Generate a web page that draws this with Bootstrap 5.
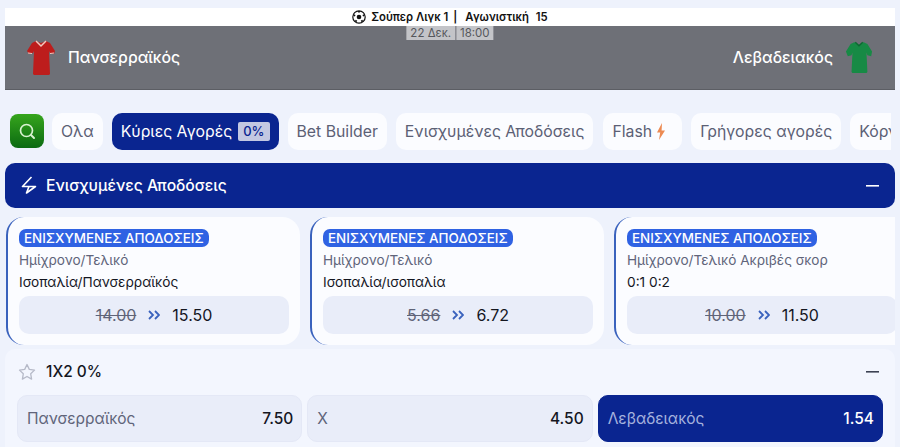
<!DOCTYPE html>
<html lang="el">
<head>
<meta charset="utf-8">
<title>Πανσερραϊκός - Λεβαδειακός</title>
<link href="https://cdn.jsdelivr.net/npm/bootstrap@5.3.0/dist/css/bootstrap.min.css" rel="stylesheet">
<style>
html,body{height:447px;overflow:hidden}
body{background:#eef2fc;font-family:Inter,"Noto Sans",sans-serif;color:#14161f;padding:8px 5px 0}
.league-bar{height:18px;background:#fff;font-size:11.3px;font-weight:600;color:#111;gap:5px;line-height:18px}
.league-sep{margin:0 3px 0 0}
.league-num{margin-left:2px}
.match-bar{height:64px;background:#6e7077;border-bottom:1px solid #5c5e64;padding:0 22px 0 21px;position:relative}
.kick{position:absolute;top:0;left:50%;transform:translateX(-50%);font-size:11.5px;line-height:14px;color:#55575c;display:flex;gap:1px}
.kick span{background:#c3c4c8;padding:0 4px}
.team{color:#fff;font-size:15.8px;font-weight:500;gap:12px}
.tabs{margin-top:22px;height:38px;padding:0 4px 0 5px;gap:9px;overflow:hidden;margin-right:4px}
.srch{width:34px;height:34px;flex:none;border-radius:8px;background:linear-gradient(#36a51c,#0b6a12);margin-right:-1px}
.tabi{flex:none;height:37px;padding:0 9px;border-radius:10px;background:#fbfcff;color:#5b6075;font-size:15.8px;white-space:nowrap;line-height:37px}
.tabi.act{background:#0a2590;color:#fff}
.tabi.fl{padding-right:16px;margin-left:1px}
.pct{display:inline-block;background:#c3c8e2;color:#0a2590;font-size:13px;font-weight:500;line-height:19px;padding:0 5px;margin-left:6px;border-radius:2px;vertical-align:1px}
.boost-head{margin-top:13px;height:45px;background:#0a2590;color:#fff;border-radius:10px;padding:0 16px 0 16px;font-size:15.7px;font-weight:500}
.head-l{gap:5px}
.boost-row{margin-top:9px;gap:10px;overflow:hidden;height:128px;padding-left:1px}
.bcard{flex:0 0 294px;height:128px;background:#fbfcff;border-radius:18px;border-left:2px solid #3a62bd;padding:12px 11px 0 11px;display:flex;flex-direction:column}
.bcard.last{border-top-right-radius:0;border-bottom-right-radius:0}
.pill{align-self:flex-start;background:#2f62e3;color:#fff;font-size:13.4px;font-weight:500;line-height:18px;padding:0 5px;border-radius:7px;white-space:nowrap}
.mk{color:#60647a;font-size:13.6px;line-height:20px;margin-top:3px}
.sel{color:#14161f;font-size:13.7px;line-height:20px;margin-top:2px}
.oddbox{margin-top:4px;height:38px;background:#e9edf9;border-radius:10px;gap:12px;font-size:16px;font-weight:400}
.old{color:#5f6478;text-decoration:line-through}
.market{margin-top:4px;background:#f3f6fe;border-radius:10px 10px 0 0;height:110px;padding:0 12px}
.mhead{height:46px;padding:0 4px 0 1px;font-size:15.4px;font-weight:500;gap:10px}
.odds{gap:5px}
.ob{flex:1 1 0;height:47px;background:#e9edf9;border:1px solid #e4e8f6;border-radius:10px;padding:0 8px 0 9px;font-size:15.5px}
.ob .nm{color:#60647a}
.ob .pr{font-weight:500}
.ob.on{background:#0a2590;border-color:#0a2590}
.ob.on .nm{color:#a5b2de}
.ob.on .pr{color:#fff}
</style>
</head>
<body>
<div class="league-bar d-flex justify-content-center align-items-center">
  <svg width="14" height="14" viewBox="0 0 14 14" aria-hidden="true"><circle cx="7" cy="7" r="6.2" fill="#fff" stroke="#111" stroke-width="1.2"/><circle cx="7" cy="7" r="2.3" fill="#111"/><path d="M7 1v1.6M1.6 5l1.6.7M12.4 5l-1.6.7M3.500 11.800l1-1.500M10.500 11.800l-1-1.500" stroke="#111" stroke-width="1.800"/></svg>
  <span>Σούπερ Λιγκ 1</span><span class="league-sep">|</span><span>Αγωνιστική</span><span class="league-num">15</span>
</div>
<div class="match-bar d-flex justify-content-between align-items-center">
  <div class="kick"><span>22 Δεκ.</span><span>18:00</span></div>
  <div class="team d-flex align-items-center">
    <svg width="30" height="36" viewBox="0 0 30 36" aria-hidden="true"><path d="M10 1l5 2 5-2 4 2 5 8-1 3-4-1-1-2 1 23-1 1H8l-1-1 1-23-1 2-4 1-2-3 5-8z" fill="#bd1d1c"/><path d="M10 1l5 5 5-5" fill="none" stroke="#f1c9bf" stroke-width="1.500"/><path d="M2 13l4 .5M28 13l-4 .5" stroke="#f1c9bf"/></svg>
    <span>Πανσερραϊκός</span>
  </div>
  <div class="team d-flex align-items-center">
    <span>Λεβαδειακός</span>
    <svg width="28" height="36" viewBox="0 0 30 36" aria-hidden="true"><path d="M10 1l5 3 5-3 4 2 5 8-1 5-4-1-1-3 1 21-1 1H8l-1-1 1-21-1 3-4 1-2-5 5-8z" fill="#178a45"/><path d="M11 1l4 4 4-4" fill="none" stroke="#0d6a32" stroke-width="1.500"/></svg>
  </div>
</div>
<div class="tabs d-flex align-items-center">
  <div class="srch d-flex align-items-center justify-content-center">
    <svg width="18" height="18" viewBox="0 0 18 18" aria-hidden="true"><circle cx="8.500" cy="8.500" r="6" fill="none" stroke="#d8f2d0" stroke-width="1.700"/><path d="M13 13l3 3" stroke="#d8f2d0" stroke-width="2" stroke-linecap="round"/></svg>
  </div>
  <div class="tabi">Ολα</div>
  <div class="tabi act">Κύριες Αγορές<span class="pct">0%</span></div>
  <div class="tabi">Bet Builder</div>
  <div class="tabi">Ενισχυμένες Αποδόσεις</div>
  <div class="tabi fl d-flex align-items-center gap-1">Flash
    <svg width="10" height="17" viewBox="0 0 10 17" aria-hidden="true"><path d="M6 0L1 9.500h3.200L3 17l6-9.500H5.600z" fill="#ec8a52"/></svg>
  </div>
  <div class="tabi">Γρήγορες αγορές</div>
  <div class="tabi">Κόρνερ</div>
</div>
<div class="boost-head d-flex justify-content-between align-items-center">
  <div class="head-l d-flex align-items-center">
    <svg width="16" height="18" viewBox="0 0 16 18" aria-hidden="true"><path d="M10.500 1L1.500 10.500h13L5.500 17l2.500-6.500" fill="none" stroke="#fff" stroke-width="1.600" stroke-linejoin="round"/></svg>
    <span class="ms-1">Ενισχυμένες Αποδόσεις</span>
  </div>
  <svg width="13" height="2" viewBox="0 0 13 2" aria-hidden="true"><rect width="13" height="1.600" fill="#fff"/></svg>
</div>
<div class="boost-row d-flex">
  <div class="bcard">
    <span class="pill">ΕΝΙΣΧΥΜΕΝΕΣ ΑΠΟΔΟΣΕΙΣ</span>
    <div class="mk">Ημίχρονο/Τελικό</div>
    <div class="sel">Ισοπαλία/Πανσερραϊκός</div>
    <div class="oddbox d-flex justify-content-center align-items-center"><span class="old">14.00</span><svg width="12" height="10" viewBox="0 0 12 10" aria-hidden="true"><path d="M1 1l4 4-4 4M7 1l4 4-4 4" fill="none" stroke="#3a62bd" stroke-width="1.800"/></svg><span>15.50</span></div>
  </div>
  <div class="bcard">
    <span class="pill">ΕΝΙΣΧΥΜΕΝΕΣ ΑΠΟΔΟΣΕΙΣ</span>
    <div class="mk">Ημίχρονο/Τελικό</div>
    <div class="sel">Ισοπαλία/ισοπαλία</div>
    <div class="oddbox d-flex justify-content-center align-items-center"><span class="old">5.66</span><svg width="12" height="10" viewBox="0 0 12 10" aria-hidden="true"><path d="M1 1l4 4-4 4M7 1l4 4-4 4" fill="none" stroke="#3a62bd" stroke-width="1.800"/></svg><span>6.72</span></div>
  </div>
  <div class="bcard last">
    <span class="pill">ΕΝΙΣΧΥΜΕΝΕΣ ΑΠΟΔΟΣΕΙΣ</span>
    <div class="mk">Ημίχρονο/Τελικό Ακριβές σκορ</div>
    <div class="sel">0:1 0:2</div>
    <div class="oddbox d-flex justify-content-center align-items-center"><span class="old">10.00</span><svg width="12" height="10" viewBox="0 0 12 10" aria-hidden="true"><path d="M1 1l4 4-4 4M7 1l4 4-4 4" fill="none" stroke="#3a62bd" stroke-width="1.800"/></svg><span>11.50</span></div>
  </div>
</div>
<div class="market">
  <div class="mhead d-flex align-items-center">
    <svg width="18" height="18" viewBox="0 0 18 18" aria-hidden="true"><path d="M9 1.500l2.300 4.900 5.200.7-3.800 3.700.9 5.300L9 13.500l-4.600 2.600.9-5.300L1.500 7.100l5.200-.7z" fill="none" stroke="#b6bac8" stroke-width="1.300" stroke-linejoin="round"/></svg>
    <span>1X2 0%</span>
    <svg class="ms-auto" width="13" height="2" viewBox="0 0 13 2" aria-hidden="true"><rect width="13" height="1.600" fill="#3d4253"/></svg>
  </div>
  <div class="odds d-flex">
    <div class="ob d-flex justify-content-between align-items-center"><span class="nm">Πανσερραϊκός</span><span class="pr">7.50</span></div>
    <div class="ob d-flex justify-content-between align-items-center"><span class="nm">Χ</span><span class="pr">4.50</span></div>
    <div class="ob on d-flex justify-content-between align-items-center"><span class="nm">Λεβαδειακός</span><span class="pr">1.54</span></div>
  </div>
</div>
</body>
</html>
